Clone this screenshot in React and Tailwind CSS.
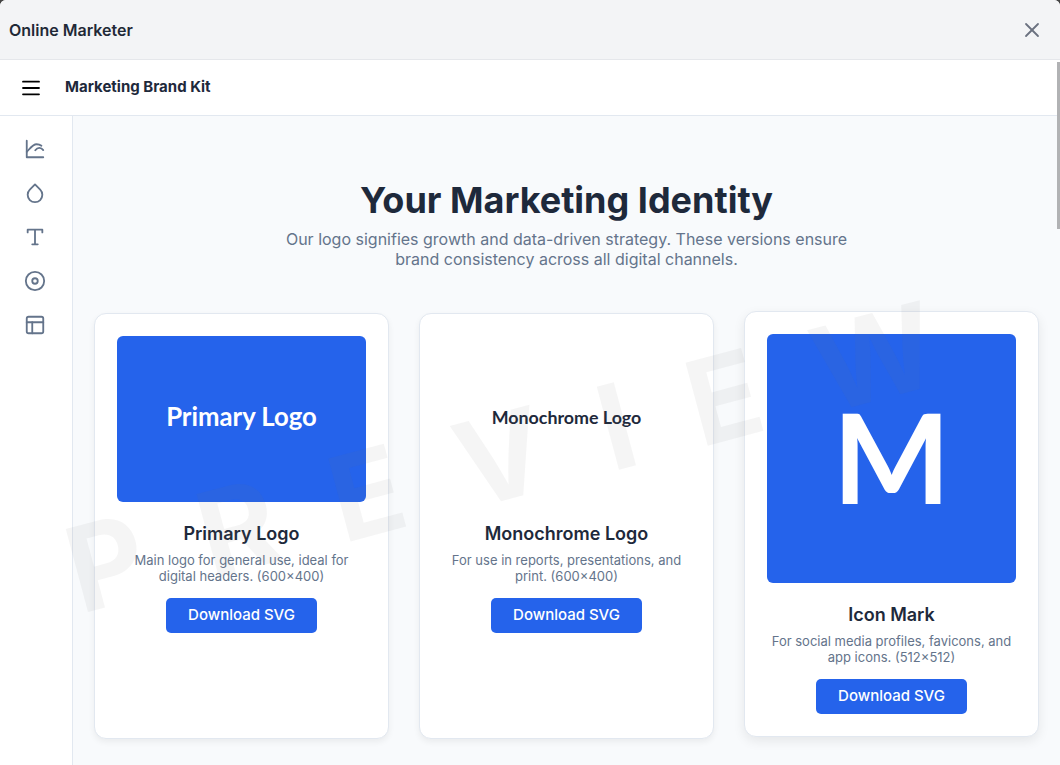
import React from 'react';
import { X, PanelsTopLeft } from 'lucide-react';

const cards = [
  {
    title: 'Primary Logo',
    text: 'Main logo for general use, ideal for digital headers. (600×400)',
    logo: { w: 600, h: 400, bg: '#2563eb', fg: '#ffffff', label: 'Primary Logo', size: 62, y: 217 },
  },
  {
    title: 'Monochrome Logo',
    text: 'For use in reports, presentations, and print. (600×400)',
    logo: { w: 600, h: 400, bg: '#ffffff', fg: '#1e293b', label: 'Monochrome Logo', size: 43, y: 212 },
  },
  {
    title: 'Icon Mark',
    text: 'For social media profiles, favicons, and app icons. (512×512)',
    logo: { w: 512, h: 512, bg: '#2563eb', fg: '#ffffff', label: 'M', size: 256, y: 349 },
    raised: true,
  },
];

function NavIcon({ children }) {
  return (
    <svg width="22" height="22" viewBox="0 0 24 24" fill="none" stroke="currentColor" strokeWidth="2" strokeLinecap="round" strokeLinejoin="round">
      {children}
    </svg>
  );
}

const navItems = [
  {
    label: 'Logos',
    icon: (
      <NavIcon>
        <path d="M3 3v18h18" />
        <path d="M3 15.2C6.5 11.5 9.5 6.8 13.7 6.8c2.2 0 3.8.5 5.3 1.7" />
        <path d="M12.3 13.4c1.2-1.6 2.6-2.6 4.4-2.6s3.2.9 4.3 2.4" />
      </NavIcon>
    ),
  },
  {
    label: 'Colors',
    icon: (
      <NavIcon>
        <path d="M12 2.69l5.66 5.66a8 8 0 1 1-11.31 0z" />
      </NavIcon>
    ),
  },
  {
    label: 'Typography',
    icon: (
      <NavIcon>
        <path d="M4 7V4h16v3M9 20h6M12 4v16" />
      </NavIcon>
    ),
  },
  {
    label: 'Icons',
    icon: (
      <NavIcon>
        <circle cx="12" cy="12" r="10" />
        <circle cx="12" cy="12" r="3" />
      </NavIcon>
    ),
  },
  { label: 'Templates', icon: <PanelsTopLeft size={22} strokeWidth={2} /> },
];

function Logo({ w, h, bg, fg, label, size, y }) {
  return (
    <svg viewBox={`0 0 ${w} ${h}`} className="block w-full rounded-md" role="img" aria-label={label}>
      <rect width={w} height={h} fill={bg} />
      <text x={w / 2} y={y} textAnchor="middle" fill={fg} fontSize={size} fontWeight="700" fontFamily="Lato, sans-serif">
        {label}
      </text>
    </svg>
  );
}

function LogoCard({ title, text, logo, raised }) {
  return (
    <article
      className={`flex flex-col items-center rounded-xl border border-[#e2e8f0] bg-white p-[22px] text-center ${
        raised ? '-translate-y-0.5 shadow-[0_4px_12px_rgba(0,0,0,0.08)]' : 'shadow-[0_3px_6px_rgba(0,0,0,0.06)]'
      }`}
    >
      <Logo {...logo} />
      <h2 className="mt-5 text-lg leading-6 font-semibold text-[#1e293b]">{title}</h2>
      <p className="mt-1.5 text-[13px] leading-4 text-[#64748b]">{text}</p>
      <button type="button" className="mt-3.5 h-[35px] rounded-[5px] bg-[#2563eb] px-[22px] text-[15px] font-medium text-white">
        Download SVG
      </button>
    </article>
  );
}

export default function App() {
  return (
    <div className="min-h-screen bg-[#444444] font-['Inter',sans-serif]">
      <div className="relative flex min-h-screen flex-col overflow-hidden rounded-t-md bg-[#f8fafc]">
        <header className="flex h-[60px] items-center justify-between border-b border-[#e5e7eb] bg-[#f3f4f6] pr-4 pl-[9px]">
          <span className="text-base font-semibold text-[#1f2937]">Online Marketer</span>
          <button type="button" aria-label="Close" className="text-[#6b7280]">
            <X size={24} strokeWidth={1.8} />
          </button>
        </header>

        <div className="flex h-14 items-center gap-[22px] border-b border-[#e2e8f0] bg-white px-[19px]">
          <button type="button" aria-label="Menu" className="text-black">
            <svg width="24" height="24" viewBox="0 0 24 24" fill="none" stroke="currentColor" strokeWidth="1.8" strokeLinecap="round">
              <path d="M4 5.7h16M4 12h16M4 18.3h16" />
            </svg>
          </button>
          <span className="text-[15px] font-bold text-[#1e293b]">Marketing Brand Kit</span>
        </div>

        <div className="flex flex-1">
          <nav className="flex w-[73px] shrink-0 flex-col border-r border-[#e2e8f0] bg-white pt-[11px] pr-0.5">
            {navItems.map((item) => (
              <a key={item.label} href="#" aria-label={item.label} className="flex h-11 items-center justify-center text-[#64748b]">
                {item.icon}
              </a>
            ))}
          </nav>

          <main className="flex-1 px-[21px] pt-[62px] pb-6">
            <div className="text-center">
              <h1 className="text-4xl leading-11 font-bold text-[#1e293b]">Your Marketing Identity</h1>
              <p className="mx-auto mt-[7px] max-w-[600px] text-base leading-5 text-[#64748b]">
                Our logo signifies growth and data-driven strategy. These versions ensure brand consistency across all digital channels.
              </p>
            </div>
            <div className="mt-11 grid grid-cols-3 gap-[30px]">
              {cards.map((card) => (
                <LogoCard key={card.title} {...card} />
              ))}
            </div>
          </main>
        </div>

        {/* Watermark */}
        <div className="pointer-events-none absolute inset-x-0 top-[389px] flex justify-center" aria-hidden="true">
          <span className="-rotate-15 text-[118px] leading-[120px] font-bold tracking-[0.5em] whitespace-nowrap text-[#787878]/7">PREVIEW</span>
        </div>

        {/* Scrollbar thumb */}
        <div className="absolute top-[62px] right-0 h-[167px] w-[3px] bg-[#b1b2b4]" />
      </div>
    </div>
  );
}
